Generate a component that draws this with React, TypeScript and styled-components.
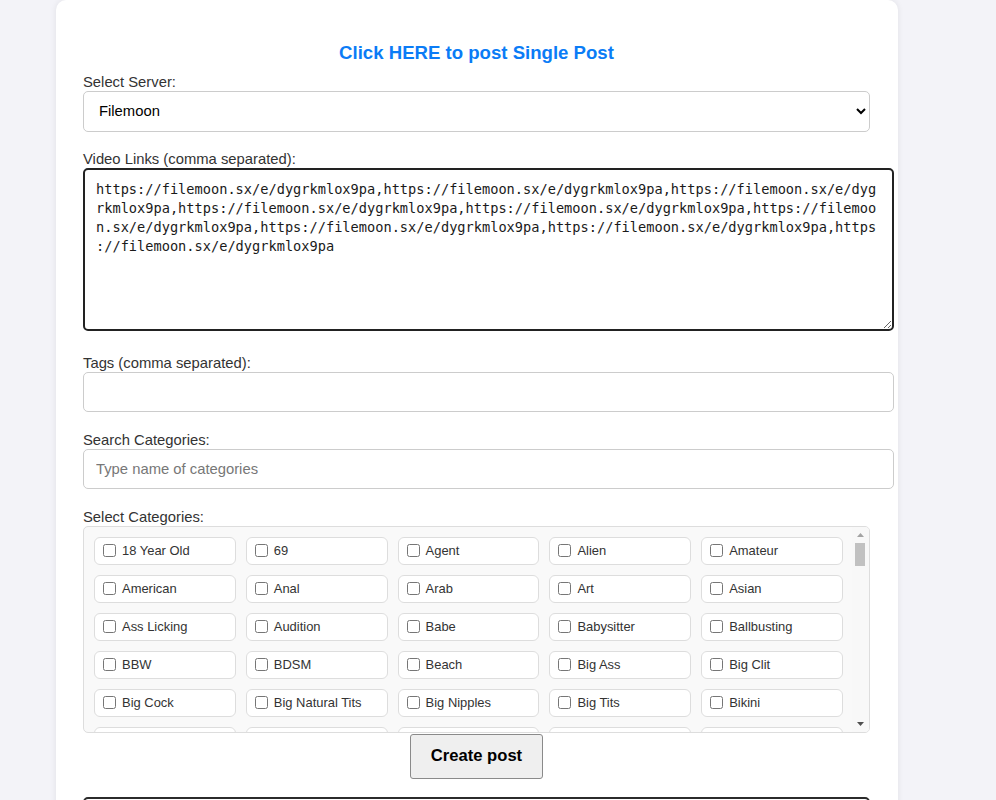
import styled, { createGlobalStyle } from "styled-components";

const GlobalStyle = createGlobalStyle`
  html, body {
    margin: 0;
    background: #f3f3f8;
    font-family: "Liberation Sans", Arial, sans-serif;
  }
`;

const links = Array(9)
  .fill("https://filemoon.sx/e/dygrkmlox9pa")
  .join(",") + " ";

const categories = (
  "18 Year Old,69,Agent,Alien,Amateur,American,Anal,Arab,Art,Asian," +
  "Ass Licking,Audition,Babe,Babysitter,Ballbusting,BBW,BDSM,Beach,Big Ass,Big Clit," +
  "Big Cock,Big Natural Tits,Big Nipples,Big Tits,Bikini,Bisexual,Black,Blonde,Blowjob,Bondage," +
  "Boots,Brazilian,British,Brunette,Bukkake,Bus,Car,Cartoon,Casting,Celebrity," +
  "CFNM,Cheating,Cheerleader,Chinese,Chubby,Classic,Close Up,Clothed,College,Compilation," +
  "Cosplay,Couple,Cowgirl,Creampie,Cuckold,Cumshot,Cute,Czech,Dancing,Deepthroat," +
  "Dildo,Doctor,Doggystyle,Double Penetration,Ebony,European,Facial,Family,Fantasy,Fat," +
  "Femdom,Fetish,Fingering,Fisting,Flashing,Footjob,French,Funny,Gangbang,Gaping," +
  "German,Glasses,Gloryhole,Gothic,Granny,Group,Gym,Hairy,Handjob,Hardcore," +
  "HD,Hentai,Hidden Cam,Homemade,Hotel,Housewife,Indian,Interracial,Italian,Japanese," +
  "Kissing,Kitchen,Korean,Latina,Leather,Lesbian,Lingerie,Massage,Masturbation,Mature," +
  "MILF,Missionary,Mom,Nurse,Office,Oiled,Old and Young,Outdoor,Pantyhose,Party," +
  "Petite,Piercing,Pornstar,POV,Pregnant,Public,Pussy Licking,Reality,Redhead,Retro," +
  "Riding,Rough,Russian,Sauna,School,Secretary,Shaved,Shower,Skinny,Small Tits," +
  "Smoking,Solo,Spanking,Sport,Squirt,Stockings,Strapon,Striptease,Swallow,Swingers," +
  "Tattoo,Teacher,Teen,Threesome,Toys,Uniform,Upskirt,Vintage,Voyeur,Webcam,Wife,Yoga"
).split(",");

const App = () => {
  return (
    <Page>
      <GlobalStyle />
      <Card>
        <TitleLink href="#">Click HERE to post Single Post</TitleLink>

        <Field gap={19.5}>
          <Label>Select Server:</Label>
          <ServerSelect defaultValue="filemoon">
            <option value="filemoon">Filemoon</option>
            <option value="streamtape">Streamtape</option>
            <option value="doodstream">Doodstream</option>
          </ServerSelect>
        </Field>

        <Field gap={23.5}>
          <Label>Video Links (comma separated):</Label>
          <LinksArea defaultValue={links} spellCheck={false} />
        </Field>

        <Field>
          <Label>Tags (comma separated):</Label>
          <TextInput type="text" />
        </Field>

        <Field>
          <Label>Search Categories:</Label>
          <TextInput type="text" placeholder="Type name of categories" />
        </Field>

        <Field gap={1}>
          <Label>Select Categories:</Label>
          <CategoryBox>
            <ScrollArea>
              <CategoryGrid>
                {categories.map((name) => (
                  <CategoryItem key={name}>
                    <Check type="checkbox" />
                    {name}
                  </CategoryItem>
                ))}
              </CategoryGrid>
            </ScrollArea>
            <ScrollRail>
              <RailArrow>
                <svg width="7" height="4" viewBox="0 0 7 4">
                  <polygon points="3.5,0 7,4 0,4" fill="#a3a3a3" />
                </svg>
              </RailArrow>
              <RailThumb />
              <RailSpace />
              <RailArrow>
                <svg width="7" height="4" viewBox="0 0 7 4">
                  <polygon points="0,0 7,0 3.5,4" fill="#505050" />
                </svg>
              </RailArrow>
            </ScrollRail>
          </CategoryBox>
        </Field>

        <ButtonRow>
          <SubmitButton type="button">Create post</SubmitButton>
        </ButtonRow>

        <ResultBox />
      </Card>
    </Page>
  );
};

export default App;

const Page = styled.div`
  padding-left: 56px;
  min-height: 100vh;
`;

const Card = styled.div`
  width: 842px;
  box-sizing: border-box;
  padding: 42px 28px 40px 27px;
  background: #fff;
  border-radius: 10px;
  box-shadow: 0 0 6px rgba(0, 0, 0, 0.08);
`;

const TitleLink = styled.a`
  display: block;
  text-align: center;
  color: #0b7cf6;
  font-weight: bold;
  font-size: 18.6px;
  line-height: 22px;
  text-decoration: none;
  margin-bottom: 9.5px;
`;

const Field = styled.div<{ gap?: number }>`
  margin-bottom: ${({ gap }) => (gap ?? 20)}px;
`;

const Label = styled.label`
  display: block;
  color: #333;
  font-size: 14.8px;
  line-height: 17px;
`;

const ServerSelect = styled.select`
  display: block;
  width: 100%;
  height: 41px;
  box-sizing: border-box;
  padding: 0 11px;
  border: 1px solid #ccc;
  border-radius: 5px;
  background: #fff;
  color: #000;
  font-family: "Liberation Sans", Arial, sans-serif;
  font-size: 14.8px;
`;

const LinksArea = styled.textarea`
  display: block;
  width: calc(100% + 24px);
  height: 163px;
  box-sizing: border-box;
  margin: 0;
  padding: 10px 11px 9px;
  border: 2px solid #222;
  border-radius: 5px;
  color: #1a1a1a;
  font-family: "DejaVu Sans Mono", "Liberation Mono", monospace;
  font-size: 13.65px;
  line-height: 19px;
  resize: vertical;
  outline: none;
`;

const TextInput = styled.input`
  display: block;
  width: calc(100% + 24px);
  height: 40px;
  box-sizing: border-box;
  margin: 0;
  padding: 0 12px;
  border: 1px solid #ccc;
  border-radius: 5px;
  font-family: "Liberation Sans", Arial, sans-serif;
  font-size: 14.8px;
  color: #000;

  &::placeholder {
    color: #777;
  }
`;

const CategoryBox = styled.div`
  display: flex;
  height: 207px;
  box-sizing: border-box;
  border: 1px solid #ddd;
  border-radius: 5px;
  background: #f9f9f9;
  overflow: hidden;
`;

const ScrollArea = styled.div`
  flex: 1;
  padding: 10px 9px 10px 10px;
  overflow: hidden;
`;

const ScrollRail = styled.div`
  display: flex;
  flex-direction: column;
  align-items: center;
  width: 17px;
  flex-shrink: 0;
  background: #f8f8f8;
`;

const RailArrow = styled.div`
  display: flex;
  align-items: center;
  justify-content: center;
  width: 17px;
  height: 16px;
  flex-shrink: 0;
`;

const RailThumb = styled.div`
  width: 10px;
  height: 23px;
  margin-left: -1px;
  background: #c1c1c1;
  flex-shrink: 0;
`;

const RailSpace = styled.div`
  flex: 1;
`;

const CategoryGrid = styled.div`
  display: grid;
  grid-template-columns: repeat(5, 1fr);
  gap: 10px;
`;

const CategoryItem = styled.label`
  display: flex;
  align-items: center;
  gap: 6px;
  height: 28px;
  box-sizing: border-box;
  padding: 0 8px;
  background: #fff;
  border: 1px solid #ddd;
  border-radius: 6px;
  color: #333;
  font-size: 12.95px;
  white-space: nowrap;
  overflow: hidden;
`;

const Check = styled.input`
  width: 13px;
  height: 13px;
  margin: 0;
  flex-shrink: 0;
`;

const ButtonRow = styled.div`
  display: flex;
  justify-content: center;
`;

const SubmitButton = styled.button`
  width: 133px;
  height: 45px;
  background: #efefef;
  border: 1px solid #8a8a8a;
  border-radius: 3px;
  color: #000;
  font-family: "Liberation Sans", Arial, sans-serif;
  font-weight: bold;
  font-size: 16.6px;
  cursor: pointer;
`;

const ResultBox = styled.div`
  margin-top: 18px;
  height: 160px;
  border: 2px solid #2b2b2b;
  border-radius: 5px;
`;
